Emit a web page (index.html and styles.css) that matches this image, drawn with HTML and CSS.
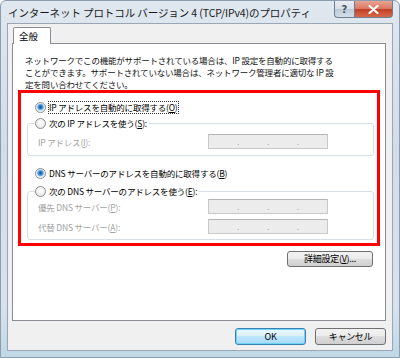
FILE: index.html
```html
<!DOCTYPE html>
<html lang="ja">

<head>
  <meta charset="UTF-8" />
  <meta name="viewport" content="width=device-width, initial-scale=1.0" />
  <title>TCP/IPv4 Properties</title>
  <link rel="stylesheet" href="styles.css">
</head>

<body>
  <div class="window">
    <div class="titlebar">
      <span class="title">インターネット プロトコル バージョン 4 (TCP/IPv4)のプロパティ</span>
      <div class="caption-btns">
        <span class="cap-btn help">?</span>
        <span class="cap-btn close">
          <svg width="11" height="9" viewBox="0 0 11 9">
            <path d="M1.5 1 L9.5 8 M9.5 1 L1.5 8" stroke="#fff" stroke-width="2.2" stroke-linecap="round" />
          </svg>
        </span>
      </div>
    </div>

    <div class="client">
      <div class="tabs"><span class="tab">全般</span></div>

      <div class="panel">
        <p class="desc">ネットワークでこの機能がサポートされている場合は、IP 設定を自動的に取得する<br>ことができます。サポートされていない場合は、ネットワーク管理者に適切な IP 設<br>定を問い合わせてください。</p>

        <div class="highlight">
          <div class="radio-row">
            <span class="radio checked"></span>
            <span class="focus">IP アドレスを自動的に取得する(<u>O</u>)</span>
          </div>

          <fieldset class="group ip-group">
            <legend>
              <span class="radio"></span>
              <span>次の IP アドレスを使う(<u>S</u>):</span>
            </legend>
            <div class="field-row">
              <span class="field-label">IP アドレス(<u>I</u>):</span>
              <span class="ipbox"><i></i><b>.</b><i></i><b>.</b><i></i><b>.</b><i></i></span>
            </div>
          </fieldset>

          <div class="radio-row dns-auto">
            <span class="radio checked"></span>
            <span>DNS サーバーのアドレスを自動的に取得する(<u>B</u>)</span>
          </div>

          <fieldset class="group dns-group">
            <legend>
              <span class="radio"></span>
              <span>次の DNS サーバーのアドレスを使う(<u>E</u>):</span>
            </legend>
            <div class="field-row">
              <span class="field-label">優先 DNS サーバー(<u>P</u>):</span>
              <span class="ipbox"><i></i><b>.</b><i></i><b>.</b><i></i><b>.</b><i></i></span>
            </div>
            <div class="field-row">
              <span class="field-label">代替 DNS サーバー(<u>A</u>):</span>
              <span class="ipbox"><i></i><b>.</b><i></i><b>.</b><i></i><b>.</b><i></i></span>
            </div>
          </fieldset>
        </div>

        <div class="adv-row">
          <button type="button" class="btn adv-btn">詳細設定(<u>V</u>)...</button>
        </div>
      </div>

      <div class="actions">
        <button type="button" class="btn default-btn">OK</button>
        <button type="button" class="btn">キャンセル</button>
      </div>
    </div>
  </div>
</body>

</html>
```

FILE: styles.css
```css
body {
  margin: 0;
  background: #fff;
  font-family: "Noto Sans CJK JP", "Noto Sans", sans-serif;
  color: #000;
}

.window {
  width: 400px;
  height: 358px;
  box-sizing: border-box;
  display: flex;
  flex-direction: column;
  background: linear-gradient(180deg, #dfe7ef 0%, #d3dde8 40%, #d9e2ec 85%, #bfd9e6 100%);
  border: 1px solid #8d9cae;
  border-radius: 6px 6px 0 0;
}

/* Title bar */
.titlebar {
  height: 24px;
  display: flex;
  justify-content: space-between;
  align-items: flex-start;
}

.title {
  font-size: 10.5px;
  line-height: 12px;
  padding: 6px 0 0 7px;
  color: #1a1a1a;
  letter-spacing: -0.1px;
  white-space: nowrap;
}

.caption-btns {
  display: flex;
  margin-right: 6px;
}

.cap-btn {
  height: 16px;
  display: flex;
  align-items: center;
  justify-content: center;
  border: 1px solid #6d7e93;
  border-top: none;
}

.help {
  width: 19px;
  border-radius: 0 0 0 4px;
  border-right: none;
  background: linear-gradient(180deg, #e9eef4 0%, #d5dee8 50%, #bccad8 51%, #d3dde7 100%);
  font-family: "DejaVu Sans", sans-serif;
  font-size: 10px;
  font-weight: bold;
  color: #4a5563;
}

.close {
  width: 37px;
  border-radius: 0 0 4px 0;
  background: linear-gradient(180deg, #e8a493 0%, #d9765f 50%, #c23f25 51%, #d6684a 100%);
}

/* Client area */
.client {
  flex: 1;
  margin: 0 6px 6px 6px;
  background: #f0f0f0;
  border: 1px solid #98a6b6;
  display: flex;
  flex-direction: column;
  padding: 3px 6px 5px 4px;
}

.tabs {
  display: flex;
  margin-left: 1px;
  margin-bottom: -1px;
  position: relative;
  z-index: 1;
}

.tab {
  width: 31px;
  height: 16px;
  background: #fff;
  border: 1px solid #898c95;
  border-bottom: none;
  border-radius: 2px 2px 0 0;
  font-size: 9.5px;
  line-height: 16px;
  padding-left: 5px;
}

.panel {
  height: 278px;
  box-sizing: border-box;
  background: #fff;
  border: 1px solid #898c95;
  padding: 10px 5px 0 5px;
  font-size: 8.5px;
  letter-spacing: -0.2px;
}

.desc {
  margin: 0 0 0 7px;
  line-height: 12px;
  color: #111;
  white-space: nowrap;
}

/* Red annotation frame */
.highlight {
  border: 3px solid #ff0000;
  padding: 7px 3px 3px 6px;
}

.radio-row {
  height: 14px;
  display: flex;
  align-items: center;
  padding-left: 8px;
  white-space: nowrap;
}

.dns-auto {
  margin-top: 10px;
}

.radio {
  width: 9px;
  height: 9px;
  border-radius: 50%;
  border: 1px solid #8e8f8f;
  background: radial-gradient(circle at 50% 40%, #ffffff 0%, #f0f0f0 50%, #d8d8d8 100%);
  margin-right: 3px;
  flex: none;
}

.radio.checked {
  background: radial-gradient(circle at 50% 45%, #0e4e86 0, #2f7fc4 1.6px, #7fbbe9 3px, #cfe7f8 3.6px, #f2f2f2 4.3px);
}

.focus {
  outline: 1px dotted #333;
  outline-offset: 0;
  line-height: 11px;
}

u {
  text-decoration-thickness: 1px;
  text-underline-offset: 1px;
}

/* Group boxes */
.group {
  margin: 2px 0 0 0;
  padding: 0 0 6px 10px;
  border: 1px solid #d5dfe5;
  border-radius: 3px;
}

.group legend {
  display: flex;
  align-items: center;
  height: 14px;
  padding: 0 2px 0 0;
  margin-left: -3px;
  background: #fff;
  white-space: nowrap;
}

.ip-group .field-row {
  margin-top: 4px;
}

.dns-group {
  margin-top: 4px;
  padding-bottom: 5px;
}

.dns-group .field-row {
  margin-top: 1px;
}

.dns-group .field-row + .field-row {
  margin-top: 5px;
}

.field-row {
  display: flex;
  align-items: center;
  height: 15px;
  color: #a3a3a3;
  white-space: nowrap;
}

.field-label {
  width: 170px;
}

.ipbox {
  width: 120px;
  height: 15px;
  box-sizing: border-box;
  display: flex;
  align-items: flex-end;
  background: #ececec;
  border: 1px solid #c9c9c9;
  border-top-color: #b4b4b4;
  padding-bottom: 3px;
}

.ipbox i {
  flex: 1;
}

.ipbox b {
  font-weight: normal;
  font-size: 7px;
  line-height: 5px;
  color: #8c8c8c;
}

/* Buttons */
.adv-row {
  display: flex;
  justify-content: flex-end;
  margin: 5px 7px 0 0;
}

.btn {
  font-family: "Noto Sans CJK JP", "Noto Sans", sans-serif;
  font-size: 9px;
  letter-spacing: -0.3px;
  height: 17px;
  width: 71px;
  padding: 0;
  border: 1px solid #707070;
  border-radius: 3px;
  background: linear-gradient(180deg, #f2f2f2 0%, #ebebeb 49%, #dddddd 50%, #cfcfcf 100%);
  color: #000;
  line-height: 14px;
}

.adv-btn {
  width: 86px;
  height: 16px;
}

.actions {
  display: flex;
  justify-content: flex-end;
  gap: 9px;
  margin-top: 7px;
}

.default-btn {
  border-color: #3c7fb1;
  box-shadow: inset 0 0 0 1px #6fd3f8;
  background: linear-gradient(180deg, #eaf6fd 0%, #d9f0fc 49%, #bee6fd 50%, #a7d9f5 100%);
}
```
